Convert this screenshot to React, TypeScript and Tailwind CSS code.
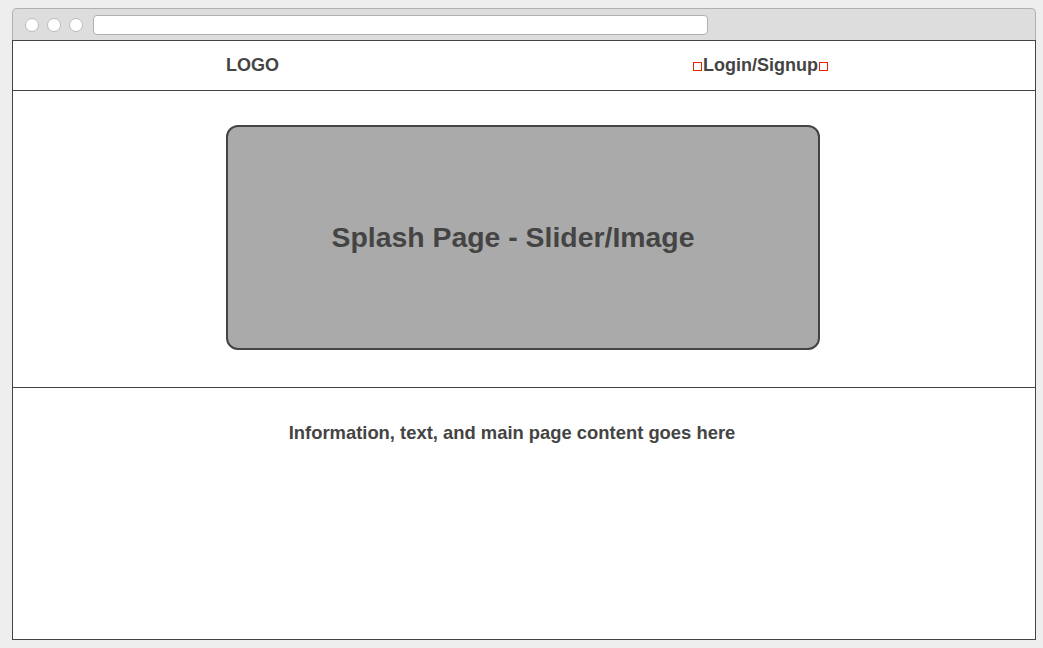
export default function App() {
  return (
    <div
      className="min-h-[648px] w-full bg-[#eeeeee] pl-[12px] pr-[7px] pt-[8px] pb-[8px] text-[#444444]"
      style={{ fontFamily: '"Liberation Sans", Arial, sans-serif' }}
    >
      {/* browser chrome */}
      <div className="flex h-[32px] items-center rounded-t-[5px] border border-b-0 border-[#b0b0b0] bg-[#dddddd] pl-[12px]">
        <div className="flex gap-[8px]">
          <span className="h-[14px] w-[14px] rounded-full border border-[#bbbbbb] bg-white" />
          <span className="h-[14px] w-[14px] rounded-full border border-[#bbbbbb] bg-white" />
          <span className="h-[14px] w-[14px] rounded-full border border-[#bbbbbb] bg-white" />
        </div>
        <div className="ml-[10px] h-[20px] w-[615px] rounded-[4px] border border-[#b0b0b0] bg-white" />
      </div>

      {/* page */}
      <div className="flex h-[600px] flex-col border border-[#444444] bg-white">
        <header className="flex h-[50px] shrink-0 items-center border-b border-[#444444]">
          <div className="pl-[213px] text-[18px] leading-[27px] font-bold">LOGO</div>
          <div className="ml-[414px] flex h-[27px] items-center text-[18px] leading-[27px] font-bold">
            <span className="mr-[1px] mt-[2px] box-border h-[9px] w-[9px] border border-solid border-[#e62200]" />
            <span>Login/Signup</span>
            <span className="ml-[1px] mt-[2px] box-border h-[9px] w-[9px] border border-solid border-[#e62200]" />
          </div>
        </header>

        <section className="flex h-[297px] shrink-0 justify-center border-b border-[#444444] pt-[34px] pr-[2px]">
          <div className="flex h-[225px] w-[594px] items-center justify-center rounded-[12px] border-2 border-[#444444] bg-[#aaaaaa] pr-[20px]">
            <span className="text-[28.4px] font-bold">Splash Page - Slider/Image</span>
          </div>
        </section>

        <main className="flex-1 pt-[31px] pr-[24px] text-center">
          <p className="text-[18.4px] font-bold">
            Information, text, and main page content goes here
          </p>
        </main>
      </div>
    </div>
  );
}
